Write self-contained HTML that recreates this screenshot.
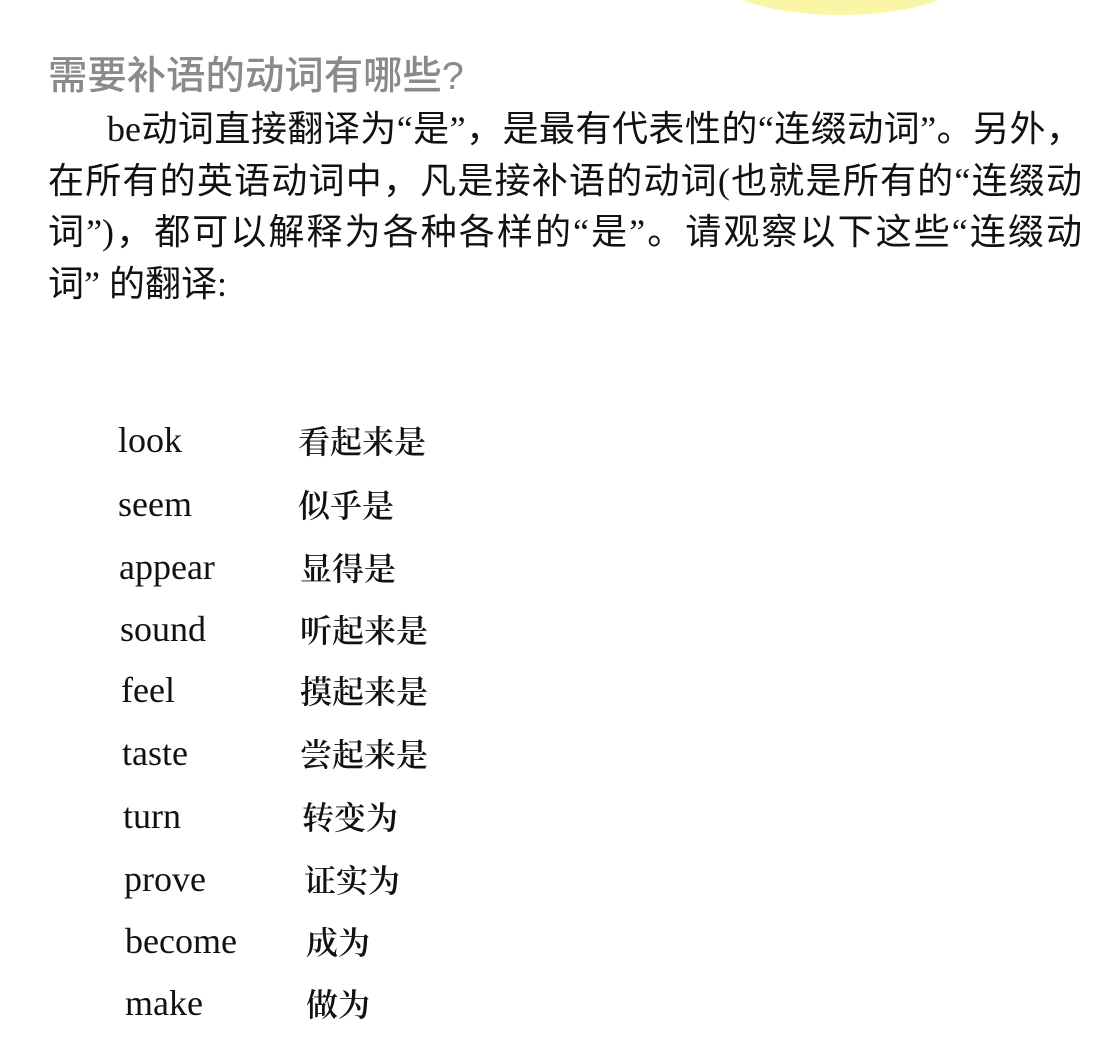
<!DOCTYPE html>
<html><head><meta charset="utf-8"><style>
body{margin:0;width:1120px;height:1040px;background:#fff;position:relative;overflow:hidden;font-family:"Liberation Serif","Noto Sans CJK SC",serif;color:#111}
.blob{position:absolute;left:718px;top:-60px;width:245px;height:75px;border-radius:50%;background:#fbf6a6}
.t{position:absolute;left:48px;top:55px;font-family:"Liberation Sans","Noto Sans CJK SC",sans-serif;font-size:39px;color:#8a8a8a;line-height:44px;transform:scaleX(1.01);transform-origin:left;font-weight:500}
.p{position:absolute;left:48px;top:104px;width:1034px;font-size:36px;line-height:51.5px;font-family:"Liberation Serif","Noto Sans CJK SC",sans-serif}
.p div{text-align:justify;text-align-last:justify;white-space:nowrap;height:51.5px}
.r{position:absolute;font-size:36px;line-height:40px;font-family:"Liberation Serif",serif}
.c{position:absolute;font-size:32px;line-height:40px;font-family:"Noto Serif CJK SC",serif;font-weight:600}
</style></head><body>
<div class="blob"></div>
<div class="t">需要补语的动词有哪些?</div>
<div class="p">
<div style="padding-left:59px">be动词直接翻译为“是”，是最有代表性的“连缀动词”。另外，</div>
<div>在所有的英语动词中，凡是接补语的动词(也就是所有的“连缀动</div>
<div>词”)，都可以解释为各种各样的“是”。请观察以下这些“连缀动</div>
<div style="text-align-last:left">词” 的翻译:</div>
</div>
<div class="r" style="left:118px;top:420px">look</div><div class="c" style="left:298px;top:420px">看起来是</div>
<div class="r" style="left:118px;top:484px">seem</div><div class="c" style="left:298px;top:484px">似乎是</div>
<div class="r" style="left:119px;top:547px">appear</div><div class="c" style="left:300px;top:547px">显得是</div>
<div class="r" style="left:120px;top:609px">sound</div><div class="c" style="left:300px;top:609px">听起来是</div>
<div class="r" style="left:121px;top:670px">feel</div><div class="c" style="left:300px;top:670px">摸起来是</div>
<div class="r" style="left:122px;top:733px">taste</div><div class="c" style="left:300px;top:733px">尝起来是</div>
<div class="r" style="left:123px;top:796px">turn</div><div class="c" style="left:302px;top:796px">转变为</div>
<div class="r" style="left:124px;top:859px">prove</div><div class="c" style="left:304px;top:859px">证实为</div>
<div class="r" style="left:125px;top:921px">become</div><div class="c" style="left:306px;top:921px">成为</div>
<div class="r" style="left:125px;top:983px">make</div><div class="c" style="left:306px;top:983px">做为</div>
</body></html>
